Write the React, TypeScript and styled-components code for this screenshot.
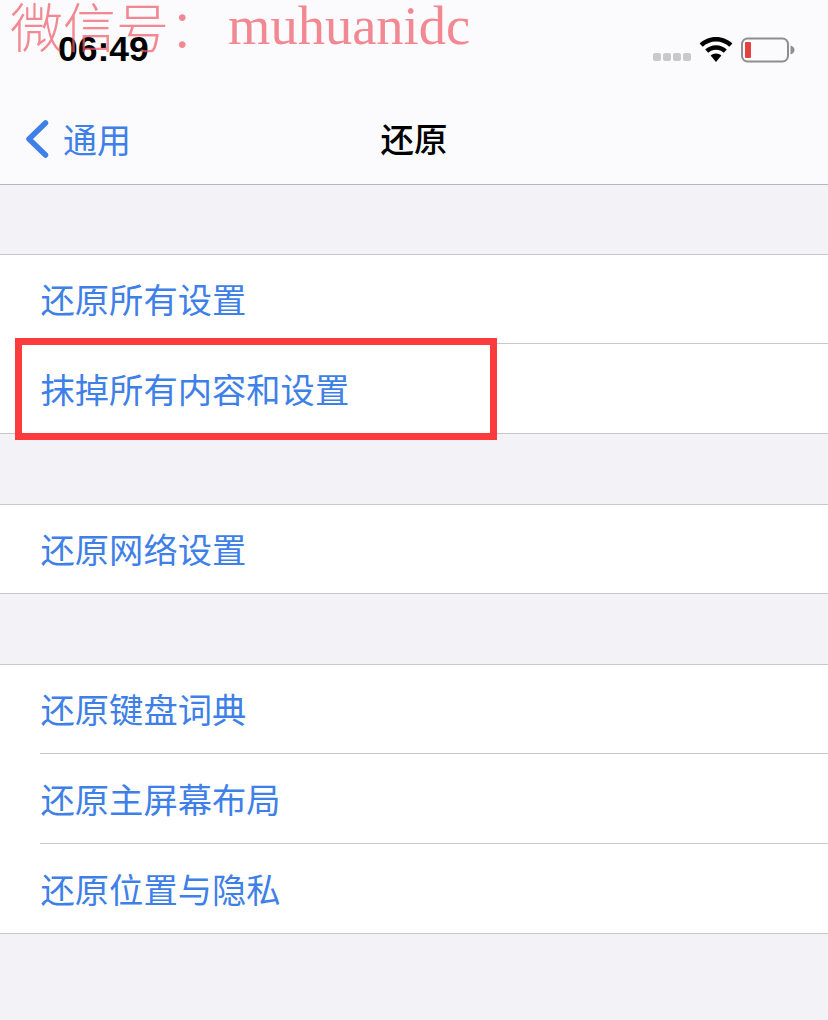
import React from 'react';
import styled, { createGlobalStyle } from 'styled-components';

const GlobalStyle = createGlobalStyle`
  html, body {
    margin: 0;
    padding: 0;
    background: #f2f2f7;
  }
  body {
    font-family: "Liberation Sans", "Noto Sans CJK SC", sans-serif;
  }
`;

const Page = styled.div`
  position: relative;
  width: 828px;
  height: 1020px;
  overflow: hidden;
  background: #f2f2f7;
`;

const Watermark = styled.div`
  position: absolute;
  left: 10px;
  top: 2px;
  display: flex;
  align-items: baseline;
  color: rgba(239, 92, 104, 0.72);
  font-family: "Noto Sans CJK SC", sans-serif;
  font-weight: 300;
  font-size: 53px;
  line-height: 46px;
  white-space: nowrap;
`;

const WatermarkLatin = styled.span`
  position: relative;
  top: -4px;
  font-family: "Liberation Serif", serif;
  font-size: 54.5px;
  margin-left: 6px;
`;

const Header = styled.header`
  background: #fbfbfd;
  border-bottom: 1px solid #b5b5bb;
  height: 184px;
`;

const StatusBar = styled.div`
  height: 94px;
  display: flex;
  align-items: flex-start;
  justify-content: space-between;
  padding: 30px 33px 0 58px;
  box-sizing: border-box;
`;

const Clock = styled.span`
  font-size: 35.5px;
  line-height: 38px;
  font-weight: 700;
  color: #000;
`;

const StatusIcons = styled.div`
  display: flex;
  align-items: flex-start;
  padding-top: 7px;
`;

const Signal = styled.div`
  display: flex;
  gap: 2px;
  margin: 16px 8px 0 0;
`;

const SignalDot = styled.span`
  width: 8px;
  height: 8px;
  border-radius: 2px;
  background: #c9c9cb;
`;

const NavBar = styled.nav`
  position: relative;
  height: 90px;
  display: flex;
  align-items: center;
  padding-left: 25px;
`;

const BackLabel = styled.span`
  margin: -2px 0 0 14px;
  font-size: 34px;
  color: #3f7fe8;
`;

const Title = styled.h1`
  position: absolute;
  left: 0;
  right: 0;
  top: 2px;
  margin: 0;
  line-height: 90px;
  font-size: 33.5px;
  font-weight: 500;
  text-align: center;
  color: #000;
`;

const Groups = styled.main`
  display: flex;
  flex-direction: column;
  gap: 70px;
  padding-top: 69px;
`;

const Group = styled.section`
  position: relative;
  background: #fff;
  border-top: 1px solid #c8c8cc;
  border-bottom: 1px solid #c8c8cc;
`;

const Row = styled.div<{ $divider?: boolean }>`
  height: ${(p) => (p.$divider ? '90px' : '89px')};
  margin-left: 40px;
  padding: 0 0 2px 0.5px;
  box-sizing: border-box;
  display: flex;
  align-items: center;
  font-size: 34.3px;
  color: #3f7fe8;
  border-bottom: ${(p) => (p.$divider ? '1px solid #c8c8cc' : 'none')};

  &:first-child {
    height: ${(p) => (p.$divider ? '89px' : '88px')};
  }
`;

const Highlight = styled.div`
  position: absolute;
  left: 15px;
  top: 83px;
  width: 482px;
  height: 102px;
  box-sizing: border-box;
  border: 7px solid #fd3a3c;
`;

const WifiIcon = () => (
  <svg width="34" height="26" viewBox="0 0 34 26" fill="#000">
    <path d="M17 0C10.6 0 4.9 2.5.6 6.5l3.1 3.2C7.2 6.5 11.9 4.5 17 4.5s9.8 2 13.3 5.2l3.1-3.2C29.1 2.500 23.400 0 17 0z" />
    <path d="M17 8.300c-4.200 0-8 1.600-10.800 4.200l3.100 3.200c2-1.800 4.700-3 7.700-3s5.700 1.200 7.700 3l3.100-3.200C25 9.900 21.200 8.300 17 8.300z" />
    <path d="M17 16.500c-2.100 0-4 .8-5.400 2.100L17 25l5.400-6.400c-1.400-1.300-3.300-2.100-5.400-2.100z" />
  </svg>
);

const BatteryIcon = () => (
  <svg width="54" height="26" viewBox="0 0 54 26" style={{ marginLeft: 8 }}>
    <rect x="1" y="1.500" width="46" height="23" rx="5.500" fill="none" stroke="#8e8e90" strokeWidth="2" />
    <rect x="4" y="5" width="6" height="16" rx="1" fill="#e2433f" />
    <path d="M49.500 8.500c2.500.6 4 2.500 4 4.500s-1.500 3.900-4 4.500z" fill="#8e8e90" />
  </svg>
);

const BackIcon = () => (
  <svg width="24" height="38" viewBox="0 0 24 38" fill="none">
    <path d="M20.500 3L4 19l16.500 16" stroke="#3f7fe8" strokeWidth="5.500" strokeLinecap="round" strokeLinejoin="round" />
  </svg>
);

const App = () => {
  return (
    <Page>
      <GlobalStyle />
      <Header>
        <StatusBar>
          <Clock>06:49</Clock>
          <StatusIcons>
            <Signal>
              <SignalDot />
              <SignalDot />
              <SignalDot />
              <SignalDot />
            </Signal>
            <WifiIcon />
            <BatteryIcon />
          </StatusIcons>
        </StatusBar>
        <NavBar>
          <BackIcon />
          <BackLabel>通用</BackLabel>
          <Title>还原</Title>
        </NavBar>
      </Header>
      <Groups>
        <Group>
          <Row $divider>还原所有设置</Row>
          <Row>抹掉所有内容和设置</Row>
          <Highlight />
        </Group>
        <Group>
          <Row>还原网络设置</Row>
        </Group>
        <Group>
          <Row $divider>还原键盘词典</Row>
          <Row $divider>还原主屏幕布局</Row>
          <Row>还原位置与隐私</Row>
        </Group>
      </Groups>
      <Watermark>
        微信号：<WatermarkLatin>muhuanidc</WatermarkLatin>
      </Watermark>
    </Page>
  );
};

export default App;
